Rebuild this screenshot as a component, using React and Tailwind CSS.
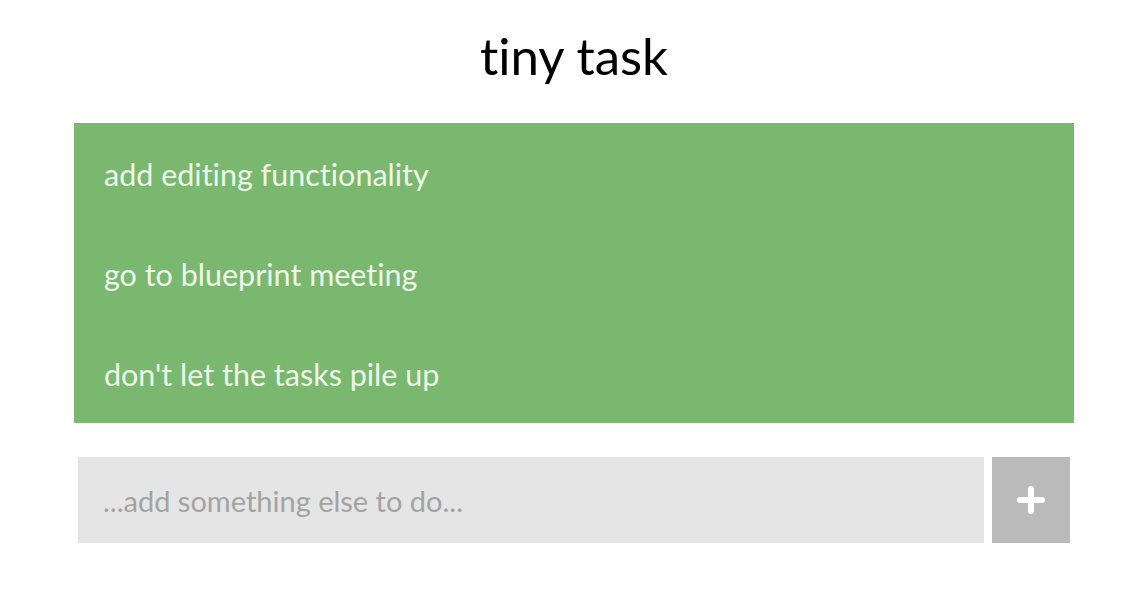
export default function App() {
  const tasks = ["add editing functionality", "go to blueprint meeting", "don't let the tasks pile up"];
  return (
    <div className="w-[1140px] h-[600px] bg-white [font-variant-ligatures:none]" style={{ fontFamily: "Lato, 'Open Sans', sans-serif" }}>
      <div className="ml-[74px] w-[1000px] pt-[25px]">
        <h1 className="text-center text-[51px] leading-[62px] text-black h-[98px]">tiny task</h1>
        <ul className="bg-[#7ab870]">
          {tasks.map((t) => (
            <li key={t} className="h-[100px] flex items-center pl-[30px] pt-[3px] text-[30.5px] text-[#eef6ea]">{t}</li>
          ))}
        </ul>
        <div className="mt-[34px] mx-[4px] flex gap-[8px] h-[86px]">
          <div className="flex-1 bg-[#e5e5e5] flex items-center pl-[25px] pt-[1px] text-[29px] text-[#a3a3a3]">...add something else to do...</div>
          <div className="w-[78px] bg-[#bababa] flex items-center justify-center">
            <svg width="28" height="28" viewBox="0 0 28 28">
              <path d="M14 3 V25 M3 14 H25" stroke="white" strokeWidth="6" strokeLinecap="round" />
            </svg>
          </div>
        </div>
      </div>
    </div>
  );
}
